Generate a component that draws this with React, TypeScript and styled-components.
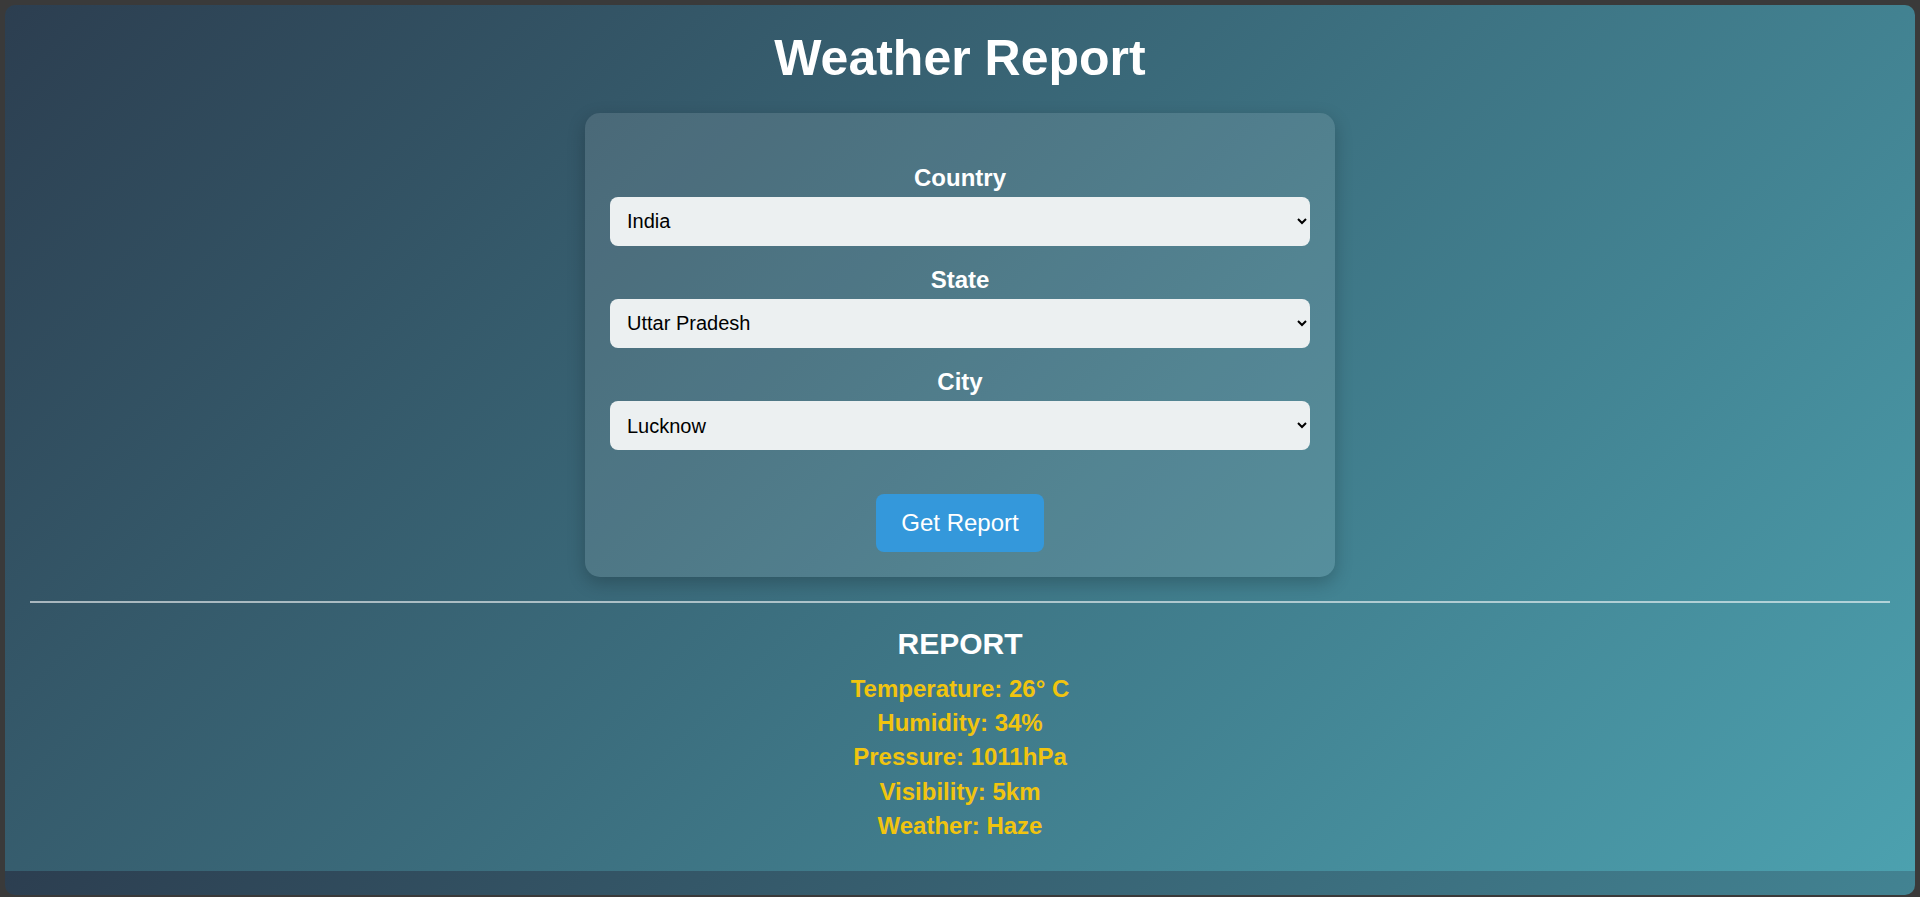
import React from "react";
import styled, { createGlobalStyle } from "styled-components";

const GlobalStyle = createGlobalStyle`
  html, body {
    margin: 0;
    padding: 0;
    background: #3a3a3a;
  }
  * { box-sizing: border-box; }
`;

const Frame = styled.div`
  width: 1920px;
  height: 897px;
  padding: 5px 5px 2px 5px;
  background: #3a3a3a;
  font-family: "Liberation Sans", Arial, sans-serif;
`;

const Viewport = styled.div`
  width: 100%;
  height: 100%;
  border-radius: 10px;
  overflow: hidden;
  background-image: linear-gradient(135deg, #2c3e50, #4ca1af);
  background-size: 100% 866px;
  background-repeat: repeat-y;
`;

const Page = styled.main`
  padding: 25px;
  display: flex;
  flex-direction: column;
  align-items: center;
`;

const Title = styled.h1`
  margin: 0 0 25.5px;
  font-size: 50px;
  font-weight: 700;
  line-height: 57.5px;
  color: #ffffff;
  text-align: center;
`;

const Card = styled.section`
  width: 750px;
  padding: 25px;
  border-radius: 15px;
  background: rgba(255, 255, 255, 0.11);
  box-shadow: 0 6px 18px rgba(0, 0, 0, 0.22);
  display: flex;
  flex-direction: column;
  align-items: center;
`;

const Form = styled.div`
  width: 100%;
  padding-top: 26px;
  display: flex;
  flex-direction: column;
  gap: 20px;
`;

const Field = styled.div`
  display: flex;
  flex-direction: column;
`;

const Label = styled.label`
  display: block;
  margin-bottom: 5px;
  font-size: 24px;
  font-weight: 700;
  line-height: 27.6px;
  color: #ffffff;
  text-align: center;
`;

const Select = styled.select`
  width: 100%;
  height: 49.5px;
  padding: 0 13px;
  border: none;
  border-radius: 8px;
  background-color: #ecf0f1;
  color: #000000;
  font-family: "Liberation Sans", Arial, sans-serif;
  font-size: 20px;
  outline: none;
`;

const Button = styled.button`
  margin-top: 44px;
  padding: 15px 25.5px;
  border: none;
  border-radius: 8px;
  background: #3498db;
  color: #ffffff;
  font-family: "Liberation Sans", Arial, sans-serif;
  font-size: 24px;
  line-height: 27.6px;
  cursor: pointer;
`;

const Divider = styled.hr`
  width: 100%;
  height: 2px;
  margin: 24px 0 0;
  border: none;
  background: rgba(255, 255, 255, 0.58);
`;

const ReportTitle = styled.h2`
  margin: 24px 0 13.4px;
  font-size: 30px;
  font-weight: 700;
  line-height: 34.5px;
  color: #ffffff;
  text-align: center;
`;

const ReportList = styled.div`
  display: flex;
  flex-direction: column;
  align-items: center;
  gap: 6.7px;
`;

const ReportLine = styled.p`
  margin: 0;
  font-size: 24px;
  font-weight: 700;
  line-height: 27.6px;
  color: #f1c40f;
`;

const fields = [
  { id: "country", label: "Country", value: "India" },
  { id: "state", label: "State", value: "Uttar Pradesh" },
  { id: "city", label: "City", value: "Lucknow" },
];

const report = [
  "Temperature: 26° C",
  "Humidity: 34%",
  "Pressure: 1011hPa",
  "Visibility: 5km",
  "Weather: Haze",
];

export default function App() {
  return (
    <>
      <GlobalStyle />
      <Frame>
        <Viewport>
          <Page>
            <Title>Weather Report</Title>
            <Card>
              <Form>
                {fields.map((f) => (
                  <Field key={f.id}>
                    <Label htmlFor={f.id}>{f.label}</Label>
                    <Select id={f.id} defaultValue={f.value}>
                      <option value={f.value}>{f.value}</option>
                    </Select>
                  </Field>
                ))}
              </Form>
              <Button type="button">Get Report</Button>
            </Card>
            <Divider />
            <ReportTitle>REPORT</ReportTitle>
            <ReportList>
              {report.map((r) => (
                <ReportLine key={r}>{r}</ReportLine>
              ))}
            </ReportList>
          </Page>
        </Viewport>
      </Frame>
    </>
  );
}
